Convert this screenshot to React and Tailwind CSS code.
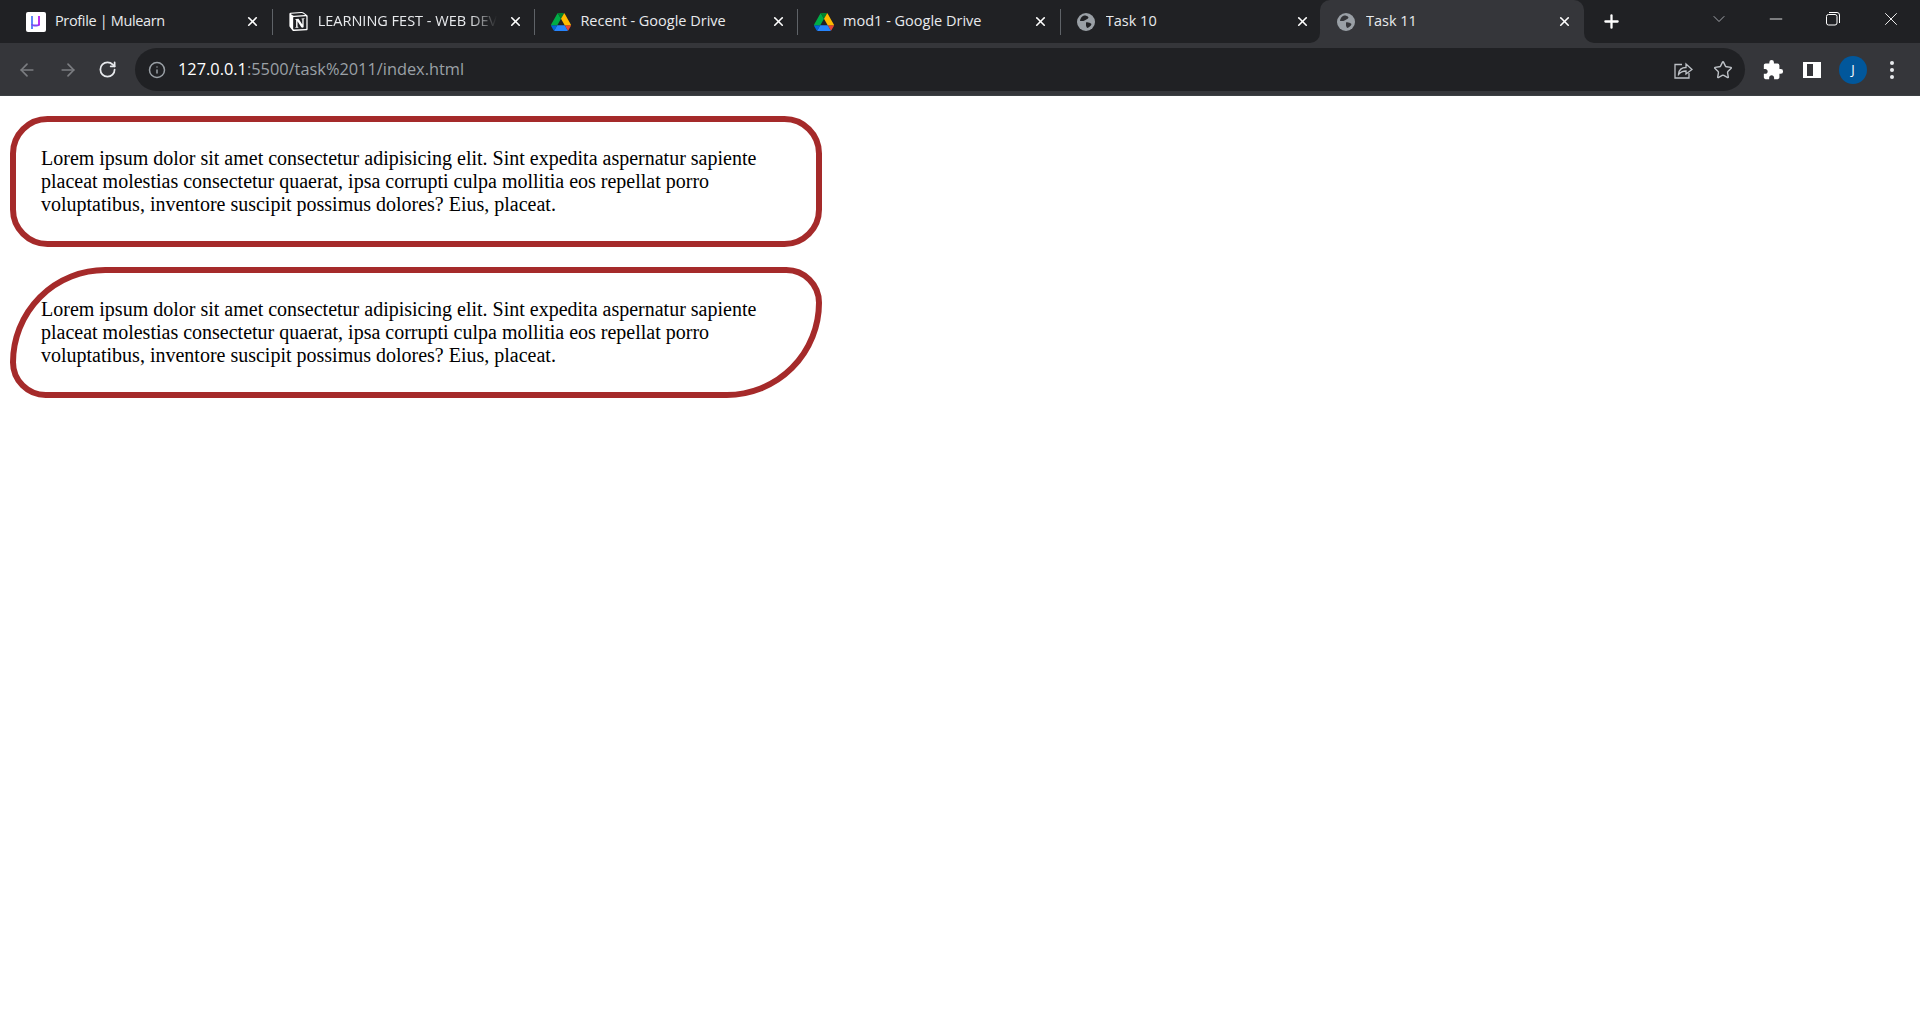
import { ArrowLeft, ArrowRight, RotateCw, Info, Star, X, Plus, ChevronDown, Minus } from 'lucide-react';
import { MdExtension } from 'react-icons/md';
import { SiNotion } from 'react-icons/si';

const LOREM = 'Lorem ipsum dolor sit amet consectetur adipisicing elit. Sint expedita aspernatur sapiente placeat molestias consectetur quaerat, ipsa corrupti culpa mollitia eos repellat porro voluptatibus, inventore suscipit possimus dolores? Eius, placeat.';

function MulearnIcon() {
  return (
    <div className="w-5 h-5 bg-white rounded-[2px] flex items-center justify-center">
      <svg width="11" height="14" viewBox="0 0 11 14" fill="none">
        <path d="M2 1v13" stroke="#4f7cf7" strokeWidth="1.800" />
        <path d="M2 9c0 1 1 1.500 2.500 1.500h2c1.500 0 2.500-.5 2.500-1.500" stroke="#7a4cf5" strokeWidth="1.800" />
        <path d="M9 1v9.500" stroke="#b51cf0" strokeWidth="1.800" />
      </svg>
    </div>
  );
}

function DriveIcon() {
  return (
    <svg width="20" height="18" viewBox="0 0 87.3 78">
      <path d="m6.6 66.85 3.85 6.65c.8 1.4 1.95 2.5 3.3 3.3l13.75-23.8h-27.5c0 1.55.4 3.1 1.2 4.5z" fill="#0066da" />
      <path d="m43.65 25-13.75-23.8c-1.35.8-2.5 1.9-3.3 3.3l-25.4 44a9.06 9.06 0 0 0 -1.2 4.5h27.5z" fill="#00ac47" />
      <path d="m73.55 76.8c1.35-.8 2.5-1.9 3.3-3.3l1.6-2.75 7.65-13.25c.8-1.4 1.2-2.95 1.2-4.5h-27.502l5.852 11.5z" fill="#ea4335" />
      <path d="m43.65 25 13.75-23.8c-1.35-.8-2.9-1.2-4.5-1.2h-18.5c-1.6 0-3.15.45-4.5 1.2z" fill="#00832d" />
      <path d="m59.8 53h-32.3l-13.75 23.8c1.35.8 2.9 1.2 4.5 1.2h50.8c1.6 0 3.15-.45 4.5-1.2z" fill="#2684fc" />
      <path d="m73.4 26.5-12.7-22c-.8-1.4-1.95-2.5-3.3-3.3l-13.75 23.8 16.15 28h27.45c0-1.55-.4-3.1-1.2-4.5z" fill="#ffba00" />
    </svg>
  );
}

function GlobeIcon({ dark }) {
  return (
    <svg width="20" height="20" viewBox="0 0 20 20">
      <circle cx="10" cy="10" r="9" fill="#9aa0a6" />
      <path d="M8 3.500c2 0 4 .5 4.500 2-.5 1.500-2 1.500-3 2.500-1 1-3 1-5.500 1 0-2.500 2-5 4-5.500z" fill={dark} />
      <path d="M10 10.500c2-.5 4 .5 5.500 1.500-.5 2-2.500 3.500-4.500 4-.5-1.500-1-1.500-1-3z" fill={dark} />
    </svg>
  );
}

function Tab({ icon, title, active, fade, divider, titleClass, widthClass }) {
  return (
    <div className={`flex items-center h-full shrink-0 ${widthClass || 'w-[262.7px]'} ${active ? 'bg-[#35363a] rounded-t-[10px]' : ''}`}>
      <div className={`shrink-0 ${active ? 'w-[16.5px]' : 'w-[15.5px]'}`} />
      <div className="w-[20px] h-5 flex items-center justify-center shrink-0">{icon}</div>
      <div className={`ml-[9.5px] pb-[2px] w-[179px] overflow-hidden whitespace-nowrap text-[14.5px] text-[#e8eaed] ${titleClass || ''} ${fade ? '[mask-image:linear-gradient(to_right,black_85%,transparent)]' : ''}`}>
        {title}
      </div>
      <div className="flex-1 flex justify-center">
        <X size={15} strokeWidth={2.6} className="text-white" />
      </div>
      {divider && <div className="w-px h-[26px] bg-[#5f6368] shrink-0" />}
    </div>
  );
}

function TabBar() {
  return (
    <div className="flex h-[43px] bg-[#202124] pl-[10px]">
      <Tab icon={<MulearnIcon />} title="Profile | Mulearn" titleClass="tracking-[-0.35px]" divider />
      <Tab icon={<SiNotion size={19} className="text-white" />} title="LEARNING FEST - WEB DEV" fade divider />
      <Tab icon={<DriveIcon />} title="Recent - Google Drive" divider />
      <Tab icon={<DriveIcon />} title="mod1 - Google Drive" divider />
      <div className="bg-[#35363a] h-full">
        <div className="h-full bg-[#202124] rounded-br-[10px]">
          <Tab icon={<GlobeIcon dark="#202124" />} title="Task 10" widthClass="w-[259.2px]" />
        </div>
      </div>
      <Tab icon={<GlobeIcon dark="#35363a" />} title="Task 11" active widthClass="w-[264px]" />
      <div className="flex-1 bg-[#35363a] h-full">
        <div className="h-full bg-[#202124] rounded-bl-[10px] flex items-start text-white">
          <div className="w-[56px] h-full flex items-center justify-center">
            <Plus size={21} strokeWidth={2.6} />
          </div>
          <div className="ml-[54px] w-[50px] h-[37px] flex items-center justify-center">
            <ChevronDown size={20} strokeWidth={1} className="text-[#bdc1c6]" />
          </div>
          <div className="ml-[4px] w-[56px] h-[37px] flex items-center justify-center">
            <Minus size={20} strokeWidth={1} />
          </div>
          <div className="w-[58px] h-[37px] flex items-center justify-center">
            <svg width="14" height="14" viewBox="0 0 14 14" fill="none" stroke="currentColor">
              <rect x="0.5" y="2.500" width="10.500" height="10.500" rx="2" />
              <path d="M3 .5h8a2.500 2.500 0 0 1 2.500 2.500v8" />
            </svg>
          </div>
          <div className="w-[58px] h-[37px] flex items-center justify-center">
            <X size={22} strokeWidth={1} />
          </div>
        </div>
      </div>
    </div>
  );
}

function Toolbar() {
  return (
    <div className="flex items-center h-[52px] bg-[#35363a] pb-[4px] pt-[5px]">
      <div className="w-[135px] flex items-center shrink-0 pl-[17px]">
        <ArrowLeft size={20} strokeWidth={2} className="text-[#7b7d81]" />
        <ArrowRight size={20} strokeWidth={2} className="text-[#7b7d81] ml-[21px]" />
        <RotateCw size={19} strokeWidth={2.2} className="text-[#e8eaed] ml-[20px]" />
      </div>
      <div className="w-[1610px] h-[43px] rounded-full bg-[#202124] flex items-center pl-[13px] pr-[12px] shrink-0">
        <Info size={18} strokeWidth={2} className="text-[#9aa0a6]" />
        <div className="ml-[12px] text-[16.35px] text-[#9aa0a6] whitespace-nowrap">
          <span className="text-white">127.0.0.1</span>:5500/task%2011/index.html
        </div>
        <div className="flex-1" />
        <svg width="20" height="20" viewBox="0 0 20 20" fill="none" stroke="#bdc1c6" strokeWidth="1.300">
          <path d="M9 4.500H2v13.500h14v-5" />
          <path d="M5.500 14c.5-4 3.500-6.500 7.500-6.500V4l6 5.500-6 4.500v-3c-3 0-5.500 1-7.500 3.500z" />
        </svg>
        <Star size={20} strokeWidth={1.700} className="text-[#bdc1c6] ml-[20px]" />
      </div>
      <div className="flex-1 flex items-center text-white pl-[17px]">
        <MdExtension size={22} />
        <div className="ml-[19px] w-[18px] h-[16px] border-[2px] border-white border-l-[4px] bg-[#35363a] flex justify-end">
          <div className="w-[6px] h-full bg-white" />
        </div>
        <div className="ml-[18px] w-[28px] h-[28px] rounded-full bg-[#01579b] flex items-center justify-center text-[13px]">J</div>
        <div className="ml-[23px] flex flex-col gap-[3px]">
          <div className="w-[4px] h-[4px] rounded-full bg-[#e8eaed]" />
          <div className="w-[4px] h-[4px] rounded-full bg-[#e8eaed]" />
          <div className="w-[4px] h-[4px] rounded-full bg-[#e8eaed]" />
        </div>
      </div>
    </div>
  );
}

export default function App() {
  return (
    <div className="h-screen overflow-hidden bg-white font-['Open_Sans',sans-serif]">
      <TabBar />
      <Toolbar />
      <div className="h-px bg-[#3c4043]" />
      <div className="w-[822px] pl-[10px] pt-[20px] flex flex-col gap-[20px] font-['Liberation_Serif',serif] text-[20px] leading-[23px] text-black">
        <div className="border-[6px] border-[#a52a2a] rounded-[37.5px] p-[25px]">{LOREM}</div>
        <div className="border-[6px] border-[#a52a2a] rounded-[100px_37.5px_100px_37.5px] p-[25px]">{LOREM}</div>
      </div>
    </div>
  );
}
